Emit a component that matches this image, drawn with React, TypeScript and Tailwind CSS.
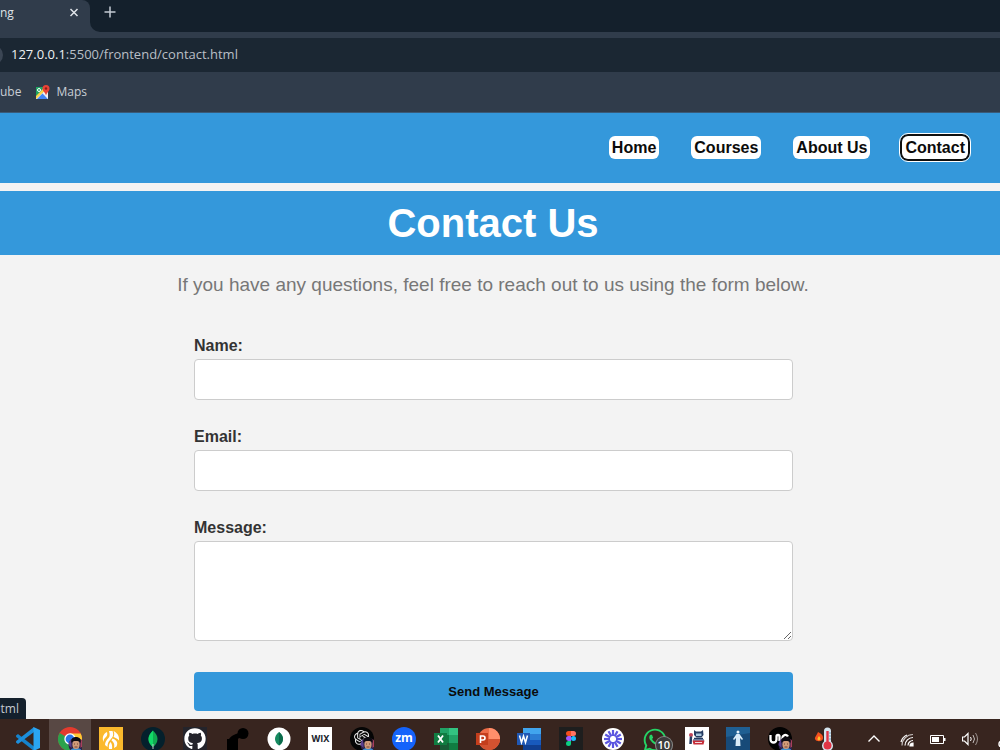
import type { ReactNode } from "react";
import { FaGithub, FaWhatsapp } from "react-icons/fa";
import { SiOpenai } from "react-icons/si";

const uiFont = "font-['Open_Sans','Noto_Sans',sans-serif]";

function Avatar() {
  return (
    <g>
      <circle cx="18" cy="18" r="7.500" fill="#2c2146" />
      <path d="M10.500 18a7.500 7.500 0 0 1 3-6v9z" fill="#5b3f8f" />
      <path d="M25.500 18a7.500 7.500 0 0 0-3-6v9z" fill="#a8405c" />
      <path d="M12 25c.5-3 2.500-4 6-4s5.500 1 6 4z" fill="#3f8fd0" />
      <ellipse cx="18" cy="17.500" rx="3.600" ry="4.500" fill="#d09a78" />
      <path d="M13.500 16c-1-4 1.500-6 4.500-6s5.500 2 4.500 6c-1-2-2.500-2-4.500-2s-3.500 0-4.500 2z" fill="#0d0b10" />
      <path d="M16 17h1M19 17h1M16.500 20h3" stroke="#5a2f25" strokeWidth=".8" />
    </g>
  );
}

function Icon({ children }: { children: ReactNode }) {
  return (
    <svg viewBox="0 0 24 24" className="size-6" aria-hidden="true">
      {children}
    </svg>
  );
}

const sunRays = [0, 30, 60, 90, 120, 150, 180, 210, 240, 270, 300, 330];

const apps: { name: string; active?: boolean; icon: ReactNode }[] = [
  {
    name: "Visual Studio Code",
    icon: (
      <Icon>
        <path d="M0 8.500 2 7l16 12.500V24L.2 10z" fill="#1583cc" />
        <path d="M0 15.500 2 17 18 5V0L.2 14z" fill="#1c8fdc" />
        <path d="M17.500 0 24 3v18l-6.500 3z" fill="#2aa5f2" />
      </Icon>
    ),
  },
  {
    name: "Google Chrome",
    active: true,
    icon: (
      <Icon>
        <circle cx="12" cy="12" r="12" fill="#e33b2e" />
        <path d="M12 12 1.600 6A12 12 0 0 0 12 24l5-9z" fill="#2ba24c" />
        <path d="M12 6.500h10.700A12 12 0 0 1 12 24l5-9z" fill="#fcc934" />
        <circle cx="12" cy="12" r="5.700" fill="#fff" />
        <circle cx="12" cy="12" r="4.400" fill="#2a75e6" />
        <Avatar />
      </Icon>
    ),
  },
  {
    name: "Road",
    icon: (
      <Icon>
        <path d="M0 0h24v24H0z" fill="#fbb92c" />
        <g fill="#fff">
          <path d="M10 4h3.500c1.500 4 .5 6-2 8.500C9 15 8.500 17 8.500 20L6 18c0-3 1.500-5 3.500-7 1.500-1.500 1.500-4 .5-7z" />
          <path d="M14.500 4c4 2 6 5 5.500 9.500C18 11 16 11 14.500 10c1-2 1-4 0-6z" />
          <path d="M13.500 11.500c4 1.500 6 4 4 8L15 21c1-4-.5-6-2.500-7.500z" />
          <path d="M11.500 15c1.500 2 2 4 1.500 7h-3c-.5-3 0-5 1.500-7z" />
          <path d="M8 5c.5 2 .5 4-1.500 5.500C5 12 4.500 13 4.500 15 3 11 4 7 8 5z" />
        </g>
      </Icon>
    ),
  },
  {
    name: "MongoDB",
    icon: (
      <Icon>
        <circle cx="12" cy="12" r="12" fill="#04202c" />
        <path d="M12 3.500c3 3 4.500 5.500 4.500 8.500 0 3.500-2 6-4.500 8-2.500-2-4.500-4.500-4.500-8 0-3 1.500-5.500 4.500-8.500z" fill="#10aa50" />
        <path d="M12 3.500v16.500c-2.500-2-4.500-4.500-4.500-8 0-3 1.500-5.500 4.500-8.500z" fill="#12d968" />
        <path d="M12 17v5" stroke="#b8c4c2" />
      </Icon>
    ),
  },
  {
    name: "GitHub",
    icon: (
      <span className="flex size-6 items-center justify-center bg-[#24242b] text-white">
        <FaGithub className="size-[22px]" />
      </span>
    ),
  },
  {
    name: "Connector",
    icon: (
      <Icon>
        <path d="M2 12h11v12H2z" />
        <circle cx="18" cy="6.500" r="5.500" />
        <path d="M3 14c2-5 7-7 11-8l2 5c-3 0-5 2-5 5z" />
      </Icon>
    ),
  },
  {
    name: "MongoDB Compass",
    icon: (
      <Icon>
        <circle cx="12" cy="12" r="11.500" fill="#fff" />
        <path d="M12 5c3 2.500 4 4.500 4 7S14.500 17 12 18.500C9.500 17 8 14.500 8 12s1-4.500 4-7z" fill="#168a60" />
        <path d="M12 5c3 2.500 4 4.500 4 7S14.500 17 12 18.500z" fill="#0b6b4b" />
      </Icon>
    ),
  },
  {
    name: "Wix",
    icon: (
      <span className="flex size-6 items-center justify-center bg-white font-['Inter',sans-serif] text-[9px] font-bold text-[#20242c]">
        WIX
      </span>
    ),
  },
  {
    name: "ChatGPT",
    icon: (
      <Icon>
        <circle cx="12" cy="12" r="12" fill="#050505" />
        <SiOpenai x="4" y="3" width="16" height="16" color="#e8e8e8" />
        <Avatar />
      </Icon>
    ),
  },
  {
    name: "Zoom",
    icon: (
      <span className="flex size-6 items-center justify-center rounded-full bg-[#1463fb] pb-0.5 font-['Open_Sans',sans-serif] text-xs font-bold text-white">
        zm
      </span>
    ),
  },
  {
    name: "Excel",
    icon: (
      <Icon>
        <path d="M6 1h9v7H6z" fill="#21a366" />
        <path d="M15 1h9v7h-9z" fill="#33c481" />
        <path d="M6 8h9v8H6z" fill="#107c41" />
        <path d="M15 8h9v8h-9z" fill="#21a366" />
        <path d="M6 16h18v8H6z" fill="#185c37" />
        <path d="M15 16h9v8h-9z" fill="#107c41" />
        <path d="M0 6h13v12H0z" fill="#107c41" />
        <path d="m4 8.500 5 7M9 8.500l-5 7" stroke="#fff" strokeWidth="1.800" />
      </Icon>
    ),
  },
  {
    name: "PowerPoint",
    icon: (
      <Icon>
        <circle cx="13" cy="12" r="11" fill="#ed6c47" />
        <path d="M13 1a11 11 0 0 1 11 11H13z" fill="#ff8f6b" />
        <path d="M2 12h22a11 11 0 0 1-22 0z" fill="#d35230" />
        <path d="M0 6h12v12H0z" fill="#c43e1c" />
        <path d="M4.500 16V9H7a2 2 0 0 1 0 4H4.500" fill="none" stroke="#fff" strokeWidth="1.600" />
      </Icon>
    ),
  },
  {
    name: "Word",
    icon: (
      <Icon>
        <path d="M6 1h18v6H6z" fill="#41a5ee" />
        <path d="M6 7h18v6H6z" fill="#2b7cd3" />
        <path d="M6 13h18v5H6z" fill="#185abd" />
        <path d="M6 18h18v6H6z" fill="#103f91" />
        <path d="M0 6h13v12H0z" fill="#2058b5" />
        <path d="m2.500 8.500 2 7 2-6.500 2 6.500 2-7" fill="none" stroke="#fff" strokeWidth="1.500" />
      </Icon>
    ),
  },
  {
    name: "Figma",
    icon: (
      <Icon>
        <path d="M0 0h24v24H0z" fill="#1e1e1e" />
        <path d="M12 4H9.500a2.500 2.500 0 0 0 0 5H12z" fill="#f24e1e" />
        <path d="M12 4h2.500a2.500 2.500 0 0 1 0 5H12z" fill="#ff7262" />
        <path d="M12 9H9.500a2.500 2.500 0 0 0 0 5H12z" fill="#a259ff" />
        <circle cx="14.500" cy="11.500" r="2.500" fill="#1abcfe" />
        <path d="M12 14H9.500a2.500 2.500 0 1 0 2.500 2.500z" fill="#0acf83" />
      </Icon>
    ),
  },
  {
    name: "Sunburst",
    icon: (
      <Icon>
        <circle cx="12" cy="12" r="11" fill="#fff" />
        <g stroke="#5b55e0" strokeWidth="2.200">
          {sunRays.map((angle) => (
            <path key={angle} d="M12 3v6" transform={`rotate(${angle} 12 12)`} />
          ))}
        </g>
        <circle cx="12" cy="12" r="2.500" fill="#fff" />
      </Icon>
    ),
  },
  {
    name: "WhatsApp",
    icon: (
      <span className="relative">
        <FaWhatsapp className="size-[26px] text-[#25d366]" />
        <span className="absolute top-2.5 left-3.5 flex size-4 items-center justify-center rounded-full bg-[#3c3c3c] font-['Open_Sans',sans-serif] text-[11px] leading-3 font-semibold text-white ring-1 ring-[#888]">
          10
        </span>
      </span>
    ),
  },
  {
    name: "Robot",
    icon: (
      <Icon>
        <path d="M0 0h24v24H0z" fill="#fff" />
        <path d="m9 3 2 1.500h5L18 3l.5 5-2 2.500h-5L9 8z" fill="#243b61" />
        <path d="M11 6.500h5.500V9H11z" fill="#a9c8df" />
        <path d="M8 12h11v2H8z" fill="#8195b5" />
        <path d="M7.500 13.500h12l-1 4h-10z" fill="#c62c38" />
        <path d="M10 15.500h7" stroke="#f2d8dc" />
        <path d="M9 11.500h9" stroke="#243b61" strokeWidth="1.500" />
        <circle cx="6" cy="8" r="2" fill="#c0455a" />
        <path d="m6 9.500-.5 7.500" stroke="#243b61" strokeWidth="2.500" />
      </Icon>
    ),
  },
  {
    name: "Statue",
    icon: (
      <Icon>
        <path d="M0 0h24v24H0z" fill="#174a78" />
        <path d="M0 0h24v6L0 10z" fill="#1f5f92" />
        <circle cx="12" cy="5" r="1.500" fill="#e6f2fb" />
        <path d="M10.500 7h3L17 12l-1 1-2-2 .5 8h-5l.5-8-2 2-1-1z" fill="#d8ebf8" />
      </Icon>
    ),
  },
  {
    name: "Unreal channel",
    icon: (
      <Icon>
        <circle cx="12" cy="12" r="12" fill="#020202" />
        <g fill="none" stroke="#fff" strokeWidth="2.300">
          <path d="M2.500 8v4.500a3 3 0 0 0 6 0V9.500c0-2 3-2 3 0V14" />
          <path d="M20 9.500a3 3 0 1 0-1 4" />
        </g>
        <Avatar />
      </Icon>
    ),
  },
];

function MapsIcon() {
  return (
    <svg viewBox="0 0 15 15" className="size-[15px]" aria-hidden="true">
      <path d="M1 2h12v12H1z" fill="#e8eaed" />
      <path d="M1 2h9L1 12z" fill="#1fa463" />
      <path d="m1 11 8-8 2 2-10 9z" fill="#fbd34a" />
      <path d="m2 14 5.500-5.500L13 14z" fill="#4285f4" />
      <path d="m8 8 2-2 3 4v4z" fill="#f1f3f4" />
      <circle cx="4" cy="5" r="1.500" fill="none" stroke="#fff" />
      <path d="M11 0a3.500 3.500 0 0 1 3.500 3.500c0 2.500-2.500 3.500-3.500 7-1-3.500-3.500-4.500-3.500-7A3.500 3.500 0 0 1 11 0z" fill="#ea4335" />
      <circle cx="11" cy="3.500" r="1.200" fill="#8c1d18" />
    </svg>
  );
}

function BrowserChrome() {
  return (
    <div className={`bg-[#303c4b] text-[#dfe3e8] ${uiFont}`}>
      <div className="flex h-8 bg-[#14202c]">
        <div className="flex w-[90px] items-start justify-between rounded-tr-lg bg-[#303c4b] pt-1 pr-[7px]">
          <span className="text-xs leading-[18px]">ng</span>
          <button aria-label="Close tab" className="p-1">
            <svg viewBox="0 0 10 10" className="size-2.5" stroke="#dfe3e8" strokeWidth="1.500">
              <path d="m1.500 1 7 7M8.500 1l-7 7" />
            </svg>
          </button>
        </div>
        <svg viewBox="0 0 10 10" className="size-2.5 self-end" aria-hidden="true">
          <path d="M0 0a10 10 0 0 0 10 10H0z" fill="#303c4b" />
        </svg>
        <button aria-label="New tab" className="mb-2 px-1">
          <svg viewBox="0 0 12 12" className="size-3" stroke="#c3cad3" strokeWidth="1.500">
            <path d="M6 .5v11M.5 6h11" />
          </svg>
        </button>
      </div>
      <div className="pt-1.5">
        <div className="flex h-[34px] items-center gap-2 overflow-hidden bg-[#1b2733]">
          <svg viewBox="0 0 3 20" className="h-5 w-[3px]" aria-hidden="true">
            <circle cx="-7" cy="10" r="10" fill="#3b4654" />
          </svg>
          <p className="text-[13px] text-[#b9bfc6]">
            <span className="text-[#eef0f2]">127.0.0.1</span>:5500/frontend/contact.html
          </p>
        </div>
      </div>
      <div className="flex h-[41px] items-center gap-3.5 border-b border-[#3a5a78] text-xs text-[#c9ced5]">
        <a href="#youtube">ube</a>
        <a href="#maps" className="flex items-center gap-1.5">
          <MapsIcon />
          Maps
        </a>
      </div>
    </div>
  );
}

const navLinks = ["Home", "Courses", "About Us", "Contact"];

function Field({ id, label, children }: { id: string; label: string; children: ReactNode }) {
  return (
    <div className="flex flex-col gap-1">
      <label htmlFor={id} className="text-base leading-[18px] font-bold text-[#333]">
        {label}
      </label>
      {children}
    </div>
  );
}

const fieldBox = "block w-full rounded border border-[#ccc] bg-white px-2.5";

function Taskbar() {
  return (
    <footer className="flex h-[31px] items-start overflow-hidden bg-[#38251f]">
      <div className="ml-[7px] grid w-[794px] shrink-0 grid-cols-19">
        {apps.map((app) => (
          <button
            key={app.name}
            aria-label={app.name}
            className={`flex h-8 justify-center pt-2 ${app.active ? "bg-[#584844]" : ""}`}
          >
            {app.icon}
          </button>
        ))}
      </div>
      <svg viewBox="0 0 20 24" className="mt-2 ml-3 h-6 w-5 shrink-0" aria-label="Weather">
        <path d="M5 5c4 2 5.500 4 5 6.500C9.500 15 3 15 2 12c-.5-2 2-4 3-7z" fill="#f4511e" />
        <path d="M6 9c2 2 2 4 0 4.500C3.500 13 4.500 11 6 9z" fill="#ffc12f" />
        <path d="M11 4a3.500 3.500 0 0 1 7 0v10.500a5.500 5.500 0 1 1-7 0z" fill="#d5e5ef" />
        <path d="M14.500 4v14" stroke="#e23545" strokeWidth="2.400" />
        <circle cx="14.500" cy="18.500" r="4" fill="#e23545" />
        <path d="M16 6h2M16 9h2M16 12h2" stroke="#7aa4bf" />
      </svg>
      <div className="ml-auto flex gap-4 pt-3 text-white">
        <svg viewBox="0 0 16 16" className="size-4" fill="none" stroke="currentColor" strokeWidth="1.400" aria-label="Show hidden icons">
          <path d="m2.500 10.500 5.500-5.500 5.500 5.500" />
        </svg>
        <svg viewBox="0 0 16 16" className="size-4" fill="none" stroke="currentColor" strokeWidth="1.200" aria-label="Wi-Fi">
          <path d="M4 14.500A11 11 0 0 1 15 3.500" opacity=".7" />
          <path d="M7 14.500a8 8 0 0 1 8-8M10 14.500a5 5 0 0 1 5-5M3 11A10 10 0 0 1 9 4" />
          <path d="M12 15a3 3 0 0 1 3-3v3z" fill="currentColor" />
        </svg>
        <svg viewBox="0 0 16 16" className="size-4" aria-label="Battery">
          <path d="M.5 4.500h13v8H.5z" fill="none" stroke="currentColor" />
          <path d="M2 6h7v5H2zM14 7h1.500v3H14z" fill="currentColor" />
        </svg>
        <svg viewBox="0 0 16 16" className="size-4" fill="none" stroke="currentColor" aria-label="Volume">
          <path d="M.5 6h2L6 2.500v11L2.500 10h-2z" strokeWidth="1.200" />
          <path d="M8.500 6q1.500 2 0 4" />
          <path d="M11 4q3 4 0 8" opacity=".7" />
          <path d="M13.500 2q4 6 0 12" opacity=".5" />
        </svg>
        <svg viewBox="0 0 6 16" className="h-4 w-1.5" fill="none" stroke="currentColor" strokeWidth="1.500" aria-hidden="true">
          <circle cx="8" cy="13" r="3" />
        </svg>
      </div>
    </footer>
  );
}

export default function App() {
  return (
    <div className="bg-[#f3f3f3] font-['Liberation_Sans',Arial,sans-serif]">
      <BrowserChrome />

      <header className="flex h-[70px] items-center justify-end bg-[#3498db] pr-8 pb-0.5">
        <nav className="flex gap-8">
          {navLinks.map((link) => (
            <a
              key={link}
              href={`#${link}`}
              className={`rounded-md bg-white px-[3px] text-base leading-[23px] font-bold text-[#0b0b0b] ${
                link === "Contact" ? "ring-2 ring-[#101010] outline-1 outline-offset-2 outline-white" : ""
              }`}
            >
              {link}
            </a>
          ))}
        </nav>
      </header>

      <main className="pt-2">
        <h1 className="bg-[#3498db] pr-3.5 text-center text-[40px] leading-[64px] font-bold text-white">Contact Us</h1>
        <div className="relative pb-2">
          <p className="pt-[15px] pr-3.5 text-center text-[19px] leading-[30px] text-[#777]">
            If you have any questions, feel free to reach out to us using the form below.
          </p>
          <form className="mt-[37px] flex flex-col items-center pr-[13px]" onSubmit={(e) => e.preventDefault()}>
            <div className="flex w-full max-w-[599px] flex-col gap-7">
              <Field id="name" label="Name:">
                <input id="name" type="text" className={`${fieldBox} h-[41px]`} />
              </Field>
              <Field id="email" label="Email:">
                <input id="email" type="email" className={`${fieldBox} h-[41px]`} />
              </Field>
              <Field id="message" label="Message:">
                <textarea id="message" className={`${fieldBox} h-[100px] resize-y`} />
              </Field>
              <button className="mt-[3px] h-[39px] rounded bg-[#3498db] text-[13px] font-bold text-[#0b0b0b]">Send Message</button>
            </div>
          </form>
          <div
            className={`absolute bottom-0 left-0 flex w-[26px] justify-end overflow-hidden rounded-tr bg-[#14202c] pr-[7px] text-xs leading-[21px] text-[#c5cad0] ${uiFont}`}
          >
            html
          </div>
        </div>
      </main>

      <Taskbar />
    </div>
  );
}
